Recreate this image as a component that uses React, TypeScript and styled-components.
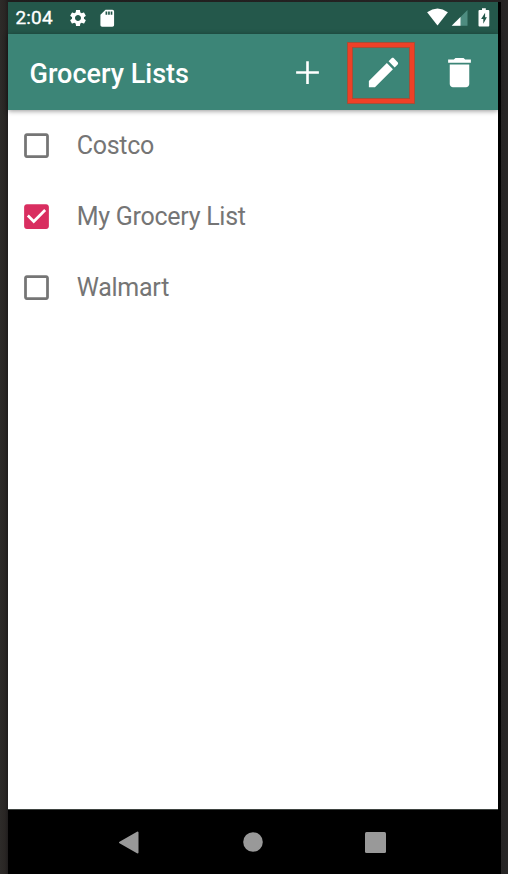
import React from "react";
import styled, { createGlobalStyle } from "styled-components";

const GlobalStyle = createGlobalStyle`
  * { box-sizing: border-box; }
  body { margin: 0; background: #262423; font-family: Roboto, sans-serif; }
`;

const Device = styled.div`
  width: 508px;
  height: 874px;
  padding: 2px 7px 0 8px;
  background: linear-gradient(90deg, #2d2b29 0, #292624 5px, #1f1d1d 8px, #262424 501px, #282626 100%);
  overflow: hidden;
`;

const Screen = styled.div`
  display: flex;
  flex-direction: column;
  height: 872px;
  border-right: 3px solid #000;
  background: #fff;
`;

const StatusBar = styled.header`
  display: flex;
  align-items: center;
  height: 32px;
  padding: 0 8.5px 0 7.5px;
  background: #24584b;
  color: #fff;
  svg { display: block; flex: none; }
`;

const Clock = styled.time`
  width: 52px;
  font-size: 19px;
  letter-spacing: 0.15px;
  line-height: 32px;
  font-weight: 400;
  -webkit-text-stroke: 0.35px #fff;
`;

const StatusIcons = styled.div<{ $end?: boolean }>`
  display: flex;
  align-items: center;
  gap: ${(p) => (p.$end ? 0 : "9.5px")};
  margin-left: ${(p) => (p.$end ? "auto" : 0)};
`;

const AppBar = styled.div`
  display: flex;
  flex: none;
  align-items: center;
  height: 76px;
  padding-left: 21.5px;
  background: #3c8577;
  box-shadow: 0 1px 5px rgba(0, 0, 0, 0.42);
  color: #fff;
  z-index: 1;
`;

const Title = styled.h1`
  flex: 1;
  margin: 0;
  font-size: 27px;
  line-height: 32px;
  font-weight: 500;
  white-space: nowrap;
  padding-top: 3px;
`;

const Action = styled.button`
  position: relative;
  display: flex;
  align-items: center;
  justify-content: center;
  width: 76.3px;
  height: 76px;
  padding: 0;
  border: 0;
  background: none;
  color: #fff;
  svg { display: block; }
`;

const Highlight = styled.span`
  position: absolute;
  left: 2px;
  top: 8px;
  width: 67.5px;
  height: 62px;
  border: 1px solid #a34f38;
  box-shadow: inset 0 0 0 4px #ee4027, inset 0 0 0 5px #a34f38;
`;

const List = styled.ul`
  flex: 1;
  margin: 0;
  padding: 0;
  list-style: none;
`;

const Item = styled.li`
  display: flex;
  align-items: center;
  height: 71px;
  padding-left: 11.5px;
  gap: 24.2px;
  color: #757575;
  svg { display: block; flex: none; }
`;

const Label = styled.span`
  font-size: 25px;
  letter-spacing: -0.27px;
  line-height: 32px;
`;

const NavBar = styled.nav`
  display: flex;
  flex: none;
  justify-content: center;
  align-items: center;
  height: 65px;
  padding-right: 1px;
  background: #000;
  border-top: 1px solid #3f4441;
`;

const NavButton = styled.button`
  display: flex;
  justify-content: center;
  align-items: center;
  width: 122.5px;
  height: 64px;
  padding: 0;
  border: 0;
  background: none;
  color: #999;
`;

const paths = {
  add: "M19 12.8h-6.2V19h-1.6v-6.2H5v-1.6h6.2V5h1.6v6.2H19z",
  edit: "M3 17.25V21h3.75L17.81 9.94l-3.75-3.75L3 17.25zM20.71 7.04c.39-.39.39-1.02 0-1.41l-2.34-2.34c-.39-.39-1.02-.39-1.41 0l-1.83 1.83 3.75 3.75 1.83-1.83z",
  trash: "M6 19c0 1.1.9 2 2 2h8c1.1 0 2-.9 2-2V7H6v12zM19 4h-3.5l-1-1h-5l-1 1H5v2h14V4z",
  gear: "M19.14 12.94c.04-.3.06-.61.06-.94 0-.32-.02-.64-.07-.94l2.03-1.58c.18-.14.23-.41.12-.61l-1.92-3.32c-.12-.22-.37-.29-.59-.22l-2.39.96c-.5-.38-1.03-.7-1.62-.94l-.36-2.54c-.04-.24-.24-.41-.48-.41h-3.84c-.24 0-.43.17-.47.41l-.36 2.54c-.59.24-1.13.57-1.62.94l-2.39-.96c-.22-.08-.47 0-.59.22L2.74 8.87c-.12.21-.08.47.12.61l2.03 1.58c-.05.3-.09.63-.09.94s.02.64.07.94l-2.03 1.58c-.18.14-.23.41-.12.61l1.92 3.32c.12.22.37.29.59.22l2.39-.96c.5.38 1.03.7 1.62.94l.36 2.54c.05.24.24.41.48.41h3.84c.24 0 .44-.17.47-.41l.36-2.54c.59-.24 1.13-.56 1.62-.94l2.39.96c.22.08.47 0 .59-.22l1.92-3.32c.12-.22.07-.47-.12-.61l-2.01-1.58zM12 15.6c-1.98 0-3.6-1.62-3.6-3.6s1.62-3.6 3.6-3.6 3.6 1.62 3.6 3.6-1.62 3.6-3.6 3.6z",
  card: "M18 2h-8L4.02 8 4 20c0 1.1.9 2 2 2h12c1.1 0 2-.9 2-2V4c0-1.1-.9-2-2-2zm-6 6h-2V4h2v4zm3 0h-2V4h2v4zm3 0h-2V4h2v4z",
  box: "M19 5v14H5V5h14m0-2H5c-1.1 0-2 .9-2 2v14c0 1.1.9 2 2 2h14c1.1 0 2-.9 2-2V5c0-1.1-.9-2-2-2z",
  boxChecked: "M19 3H5c-1.11 0-2 .9-2 2v14c0 1.1.89 2 2 2h14c1.11 0 2-.9 2-2V5c0-1.1-.89-2-2-2zm-9 14l-5-5 1.41-1.41L10 14.17l7.59-7.59L19 8l-9 9z",
};

const Glyph = ({ name, size, color = "currentColor" }: { name: keyof typeof paths; size: number; color?: string }) => (
  <svg width={size} height={size} viewBox="0 0 24 24" fill={color}>
    <path d={paths[name]} />
  </svg>
);

const lists = [
  { name: "Costco", checked: false },
  { name: "My Grocery List", checked: true },
  { name: "Walmart", checked: false },
];

export default function App() {
  return (
    <Device>
      <GlobalStyle />
      <Screen>
        <StatusBar>
          <Clock>2:04</Clock>
          <StatusIcons>
            <Glyph name="gear" size={20} />
            <Glyph name="card" size={20.5} />
          </StatusIcons>
          <StatusIcons $end>
            <svg width="63" height="20" viewBox="0 0 63 20" fill="#fff">
              <path d="M.1 4.2Q10.500 -3.200 20.900 4.200L10.500 17.400z" />
              <path d="M40.500 2v15.800H24.700z" fill="#4e8c80" />
              <path d="M33.500 9v8.800H24.700z" />
              <path
                fillRule="evenodd"
                d="M55 .3h3.800v1.600h2.500q1 0 1 1v14.600q0 1 -1 1h-8.800q-1 0 -1 -1V2.900q0-1 1-1h2.500zM58.100 4.800L54.100 11h2.200v4.700l3.600-6.500h-1.800z"
              />
            </svg>
          </StatusIcons>
        </StatusBar>
        <AppBar>
          <Title>Grocery Lists</Title>
          <Action aria-label="Add list"><Glyph name="add" size={39} /></Action>
          <Action aria-label="Edit list">
            <Glyph name="edit" size={39} />
            <Highlight />
          </Action>
          <Action aria-label="Delete list"><Glyph name="trash" size={39} /></Action>
        </AppBar>
        <List>
          {lists.map((l) => (
            <Item key={l.name}>
              <Glyph
                name={l.checked ? "boxChecked" : "box"}
                size={33}
                color={l.checked ? "#d92e60" : "#757575"}
              />
              <Label>{l.name}</Label>
            </Item>
          ))}
        </List>
        <NavBar>
          <NavButton aria-label="Back">
            <svg width="26" height="24" viewBox="0 0 26 24">
              <path d="M3 12.500L20.500 2.500v20z" fill="currentColor" stroke="currentColor" strokeWidth="2" strokeLinejoin="round" />
            </svg>
          </NavButton>
          <NavButton aria-label="Home">
            <svg width="20" height="20"><circle cx="10" cy="10" r="9.800" fill="currentColor" /></svg>
          </NavButton>
          <NavButton aria-label="Overview">
            <svg width="21" height="21"><rect width="21" height="21" rx="1.500" fill="currentColor" /></svg>
          </NavButton>
        </NavBar>
      </Screen>
    </Device>
  );
}
